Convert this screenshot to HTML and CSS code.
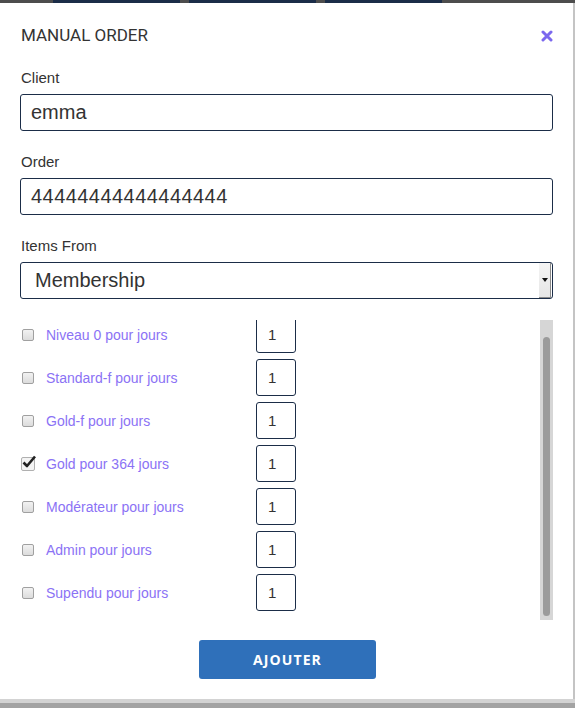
FILE: index.html
```html
<!DOCTYPE html>
<html>
<head>
<meta charset="utf-8">
<link rel="stylesheet" href="styles.css">
</head>
<body>
<div class="strip">
  <div class="s-gray s1"></div>
  <div class="s-blue s2"></div>
  <div class="s-gray s3"></div>
  <div class="s-blue s4"></div>
  <div class="s-gray s5"></div>
  <div class="s-blue s6"></div>
  <div class="s-gray s7"></div>
</div>
<div class="modal">
  <div class="header">
    <h1 class="title">MANUAL ORDER</h1>
    <svg class="close" width="12" height="12" viewBox="0 0 12 12"><path d="M2 2 L10 10 M10 2 L2 10" stroke="#7b68ee" stroke-width="3" stroke-linecap="round"/></svg>
  </div>
  <label class="label">Client</label>
  <div class="input">emma</div>
  <label class="label">Order</label>
  <div class="input wide">44444444444444444</div>
  <label class="label">Items From</label>
  <div class="input select"><span>Membership</span><span class="sel-btn"><svg width="6" height="4" viewBox="0 0 6 4"><path d="M0 0 H6 L3 4 Z" fill="#111"/></svg></span></div>
  <div class="listwrap">
    <div class="list">
      <div class="rows">
        <div class="row"><span class="cb"></span><span class="name">Niveau 0 pour jours</span><span class="num">1</span></div>
        <div class="row"><span class="cb"></span><span class="name">Standard-f pour jours</span><span class="num">1</span></div>
        <div class="row"><span class="cb"></span><span class="name">Gold-f pour jours</span><span class="num">1</span></div>
        <div class="row"><span class="cb checked"><svg width="16" height="16" viewBox="0 0 16 16"><path d="M2.5 8.5 L6 12 L14 2.5" stroke="#222" stroke-width="2.6" fill="none" stroke-linejoin="round"/></svg></span><span class="name">Gold pour 364 jours</span><span class="num">1</span></div>
        <div class="row"><span class="cb"></span><span class="name">Modérateur pour jours</span><span class="num">1</span></div>
        <div class="row"><span class="cb"></span><span class="name">Admin pour jours</span><span class="num">1</span></div>
        <div class="row"><span class="cb"></span><span class="name">Supendu pour jours</span><span class="num">1</span></div>
      </div>
    </div>
    <div class="track"><div class="thumb"></div></div>
  </div>
  <div class="actions"><button class="btn">AJOUTER</button></div>
</div>
<div class="foot1"></div>
<div class="foot2"></div>
</body>
</html>
```
FILE: styles.css
```css
html, body { margin: 0; padding: 0; }
body { background: #a3a3a3; font-family: "Liberation Sans", Arial, sans-serif; color: #333; }
.strip { display: flex; height: 3px; }
.s-gray { background: #4d4d4d; }
.s-blue { background: #1b2d48; }
.s1 { width: 53px; } .s2 { width: 127px; } .s3 { width: 9px; } .s4 { width: 127px; }
.s5 { width: 9px; } .s6 { width: 117px; } .s7 { flex: 1; }
.modal { background: #fff; height: 696px; box-sizing: border-box; padding: 0 20px 0 20px; border-right: 2px solid #c4c4c4; display: flex; flex-direction: column; }
.header { display: flex; justify-content: space-between; align-items: center; height: 24px; margin-top: 20px; margin-bottom: 21px; }
.title { margin: 0; font-family: Roboto, sans-serif; font-weight: 400; font-size: 17px; color: #333; line-height: 24px; padding-left: 1px; }
.close { margin-right: 0px; margin-top: 2px; }
.label { display: block; font-size: 15px; line-height: 19px; margin: 0 0 7px 1px; color: #333; }
.input { height: 37px; box-sizing: border-box; border: 1px solid #1b2d48; border-radius: 3px; font-size: 20px; line-height: 35px; padding-left: 10px; margin-bottom: 21px; color: #333; }
.wide { letter-spacing: 0.45px; }
.select { display: flex; justify-content: space-between; padding-left: 14px; padding-right: 0; }
.sel-btn { width: 12px; margin: 0 1px 0 0; background: linear-gradient(#f4f4f4, #e6e6e6); border-right: 1px solid #8a8a8a; border-bottom: 1px solid #8a8a8a; display: flex; align-items: center; justify-content: center; box-sizing: border-box; }
.listwrap { display: flex; height: 300px; }
.list { flex: 1; overflow: hidden; }
.rows { margin-top: -4px; }
.row { display: flex; align-items: center; height: 37px; margin-bottom: 6px; }
.cb { width: 12px; height: 12px; box-sizing: border-box; border: 1px solid #a0a0a0; border-radius: 2px; background: linear-gradient(#f2f2f2, #dcdcdc); margin-left: 2px; position: relative; }
.cb.checked { width: 14px; height: 14px; margin-left: 1px; border-color: #b0b0b0; background: #f4f4f4; }
.cb.checked svg { position: absolute; left: -1px; top: -4px; }
.name { font-size: 14px; color: #8b72f5; margin-left: 12px; width: 210px; }
.cb.checked + .name { margin-left: 11px; }
.num { width: 40px; height: 37px; box-sizing: border-box; border: 1px solid #1b2d48; border-radius: 3px; font-size: 15px; line-height: 35px; padding-left: 11px; color: #333; }
.track { width: 13px; background: #d6d6d6; position: relative; }
.thumb { position: absolute; left: 3px; top: 17px; width: 7px; height: 279px; border-radius: 4px; background: #9b9b9b; }
.actions { display: flex; justify-content: center; margin-top: 20px; padding-right: 20px; }
.btn { width: 177px; height: 39px; background: #2f70ba; color: #fff; border: none; border-radius: 3px; font-family: "Open Sans", sans-serif; font-weight: 700; font-size: 14px; letter-spacing: 1.1px; margin-left: 22px; }
.foot1 { height: 4px; background: #d3d3d3; }
.foot2 { height: 5px; background: #a3a3a3; }
```
